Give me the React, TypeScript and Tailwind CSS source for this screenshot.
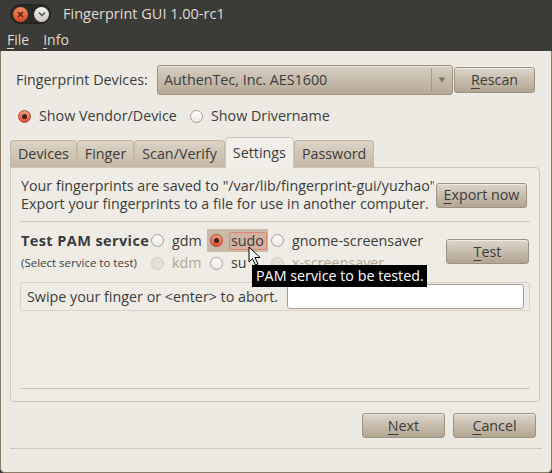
const FONT = "font-['Open_Sans','DejaVu_Sans',sans-serif]";

function Mn({ c, rest }: { c: string; rest: string }) {
  return (
    <span>
      <span className="underline underline-offset-[3px] decoration-1">{c}</span>
      {rest}
    </span>
  );
}

function Button({ children, w, h = 'h-[25px]' }: { children: React.ReactNode; w: string; h?: string }) {
  return (
    <div
      className={`${w} ${h} shrink-0 flex items-center justify-center rounded-[3px] border border-[#9d917f] bg-gradient-to-b from-[#ddd6cb] to-[#b2a591] text-[#3c3c3c] shadow-[inset_0_1px_0_rgba(255,255,255,0.5)]`}
    >
      {children}
    </div>
  );
}

function Radio({ state }: { state: 'on' | 'off' | 'disabled' }) {
  if (state === 'on') {
    return (
      <span className="w-[13px] h-[13px] shrink-0 rounded-full border border-[#b3452c] bg-gradient-to-b from-[#f49b7d] to-[#dc4d2e] flex items-center justify-center">
        <span className="w-[5px] h-[5px] rounded-full bg-[#3a2621]" />
      </span>
    );
  }
  if (state === 'disabled') {
    return <span className="w-[13px] h-[13px] shrink-0 rounded-full border border-[#d6cec2] bg-[#e4ded4]" />;
  }
  return <span className="w-[13px] h-[13px] shrink-0 rounded-full border border-[#a79f92] bg-gradient-to-b from-white to-[#ece9e4]" />;
}

function Tab({ label, active }: { label: string; active?: boolean }) {
  if (active) {
    return (
      <div className="h-[31px] -mb-px px-[7px] flex items-center rounded-t-[4px] border border-b-0 border-[#cfc6b8] bg-[#f2efea] text-[#3c3c3c] relative z-10">
        {label}
      </div>
    );
  }
  return (
    <div className="h-[27px] px-[7px] flex items-center rounded-t-[4px] border border-b-0 border-[#c4b8a6] bg-gradient-to-b from-[#dcd3c5] to-[#c6b9a5] text-[#3c3c3c]">
      {label}
    </div>
  );
}

export default function App() {
  return (
    <div className={`relative w-[552px] h-[473px] overflow-hidden bg-[#3c3b37] flex flex-col text-[14.3px] text-[#3c3c3c] ${FONT}`}>
      {/* title bar */}
      <div className="h-[28px] shrink-0 flex items-center pl-[10px]">
        <div className="w-[41px] h-[20px] rounded-full bg-[#2a2926] border border-[#232220] flex items-center gap-[6px] pl-[2px]">
          <span className="w-[15px] h-[15px] rounded-full bg-gradient-to-b from-[#f58a5e] to-[#d5441c] flex items-center justify-center">
            <svg width="7" height="7" viewBox="0 0 7 7">
              <path d="M1 1L6 6M6 1L1 6" stroke="#4a2010" strokeWidth="1.4" />
            </svg>
          </span>
          <span className="w-[15px] h-[15px] rounded-full bg-gradient-to-b from-[#f4f3f0] to-[#c8c5be] flex items-center justify-center">
            <svg width="8" height="6" viewBox="0 0 8 6">
              <path d="M1 1.5L4 4.5L7 1.5" stroke="#55524c" strokeWidth="1.4" fill="none" />
            </svg>
          </span>
        </div>
        <span className="ml-[12px] text-[14.5px] text-[#dfdbd2]">Fingerprint GUI 1.00-rc1</span>
      </div>

      {/* menu bar */}
      <div className="h-[23px] shrink-0 flex items-center gap-[14px] pl-[7px] text-[14px] text-[#dfdbd2]">
        <Mn c="F" rest="ile" />
        <Mn c="I" rest="nfo" />
      </div>

      {/* body */}
      <div className="flex-1 flex flex-col bg-[#edeae4] border-x border-b border-[#8a7b65] rounded-b-[5px]">
        <div className="mt-[14px] h-[30px] flex items-center pl-[15px]">
          <span className="w-[141px] shrink-0">Fingerprint Devices:</span>
          <div className="w-[296px] h-[30px] rounded-[3px] border border-[#9d917f] bg-gradient-to-b from-[#d8d0c4] to-[#b6a995] flex items-center shadow-[inset_0_1px_0_rgba(255,255,255,0.45)]">
            <span className="flex-1 pl-[6px]">AuthenTec, Inc. AES1600</span>
            <span className="w-px h-[24px] bg-[#a69984]" />
            <span className="w-[20px] flex justify-center">
              <svg width="8" height="6" viewBox="0 0 8 6">
                <path d="M0.5 0.5H7.5L4 5.5Z" fill="#7e7462" />
              </svg>
            </span>
          </div>
          <div className="ml-[1px]">
            <Button w="w-[81px]" h="h-[26px]">
              <Mn c="R" rest="escan" />
            </Button>
          </div>
        </div>

        <div className="mt-[13px] h-[16px] flex items-center pl-[17px]">
          <Radio state="on" />
          <span className="ml-[8px] w-[151px]">Show Vendor/Device</span>
          <Radio state="off" />
          <span className="ml-[8px]">Show Drivername</span>
        </div>

        {/* tabs */}
        <div className="mt-[13px] h-[30px] flex items-end ml-[9px]">
          <Tab label="Devices" />
          <Tab label="Finger" />
          <Tab label="Scan/Verify" />
          <Tab label="Settings" active />
          <Tab label="Password" />
        </div>

        <div className="ml-[9px] w-[530px] h-[235px] rounded-b-[4px] rounded-tr-[4px] border border-[#cfc6b8] bg-[#efece6] flex flex-col px-[9px]">
          <div className="mt-[9px] h-[36px] flex items-center">
            <div className="w-[414px] pl-px overflow-hidden whitespace-nowrap leading-[18px]">
              <div>Your fingerprints are saved to "/var/lib/fingerprint-gui/yuzhao"</div>
              <div>Export your fingerprints to a file for use in another computer.</div>
            </div>
            <div className="ml-[2px]">
              <Button w="w-[91px]">
                <Mn c="E" rest="xport now" />
              </Button>
            </div>
          </div>

          <div className="mt-[8px] h-px bg-[#d0c8bb]" />

          <div className="mt-[7px] flex">
            <div className="grid grid-cols-[131px_56px_64px_auto] grid-rows-[23px_22px] items-center">
              <span className="pl-px font-bold text-[14.5px] tracking-[0.4px] whitespace-nowrap">Test PAM service</span>
              <div className="flex items-center gap-[8px]">
                <Radio state="off" />
                <span>gdm</span>
              </div>
              <div className="w-[61px] h-[23px] bg-[#c9b9a6] flex items-center pl-[3px] gap-[6px]">
                <Radio state="on" />
                <span className="w-[38px] h-[18px] rounded-[2px] border border-[#e08470] bg-[#d2b2a1] flex items-center pl-[1px]">
                  sudo
                </span>
              </div>
              <div className="flex items-center gap-[8px]">
                <Radio state="off" />
                <span>gnome-screensaver</span>
              </div>

              <span className="pl-px text-[11.5px]">(Select service to test)</span>
              <div className="flex items-center gap-[8px]">
                <Radio state="disabled" />
                <span className="text-[#b5a58f]">kdm</span>
              </div>
              <div className="flex items-center gap-[8px] pl-[3px]">
                <Radio state="off" />
                <span>su</span>
              </div>
              <div className="flex items-center gap-[8px]">
                <Radio state="disabled" />
                <span className="text-[#b5a58f]">x-screensaver</span>
              </div>
            </div>
            <div className="ml-auto mt-[10px] mr-[1px]">
              <Button w="w-[83px]">
                <Mn c="T" rest="est" />
              </Button>
            </div>
          </div>

          <div className="mt-[8px] h-[29px] border border-[#d9d1c5] rounded-[2px] flex items-center pl-[6px] pr-[5px]">
            <span>Swipe your finger or &lt;enter&gt; to abort.</span>
            <div className="ml-auto w-[237px] h-[25px] bg-white border border-[#a89f91] rounded-[3px]" />
          </div>

          <div className="flex-1" />
          <div className="mb-[12px] h-px bg-[#cfc7ba]" />
        </div>

        <div className="mt-[11px] flex justify-end gap-[8px] pr-[15px]">
          <Button w="w-[83px]">
            <Mn c="N" rest="ext" />
          </Button>
          <Button w="w-[83px]">
            <Mn c="C" rest="ancel" />
          </Button>
        </div>

        <div className="mt-[10px] mx-[9px] h-px bg-[#cfc7ba]" />
      </div>

      {/* tooltip */}
      <div className="absolute left-[252px] top-[265px] w-[175px] h-[22px] bg-black text-white text-[14.3px] flex items-center pl-[4px] whitespace-nowrap overflow-hidden z-20">
        PAM service to be tested.
      </div>

      {/* mouse pointer */}
      <svg className="absolute left-[248px] top-[246px] z-30" width="14" height="21" viewBox="0 0 14 21">
        <path d="M1 1V16L4.5 12.5L7.5 19L10 18L7 11.5H12Z" fill="white" stroke="black" strokeWidth="1" strokeLinejoin="round" />
      </svg>
    </div>
  );
}
